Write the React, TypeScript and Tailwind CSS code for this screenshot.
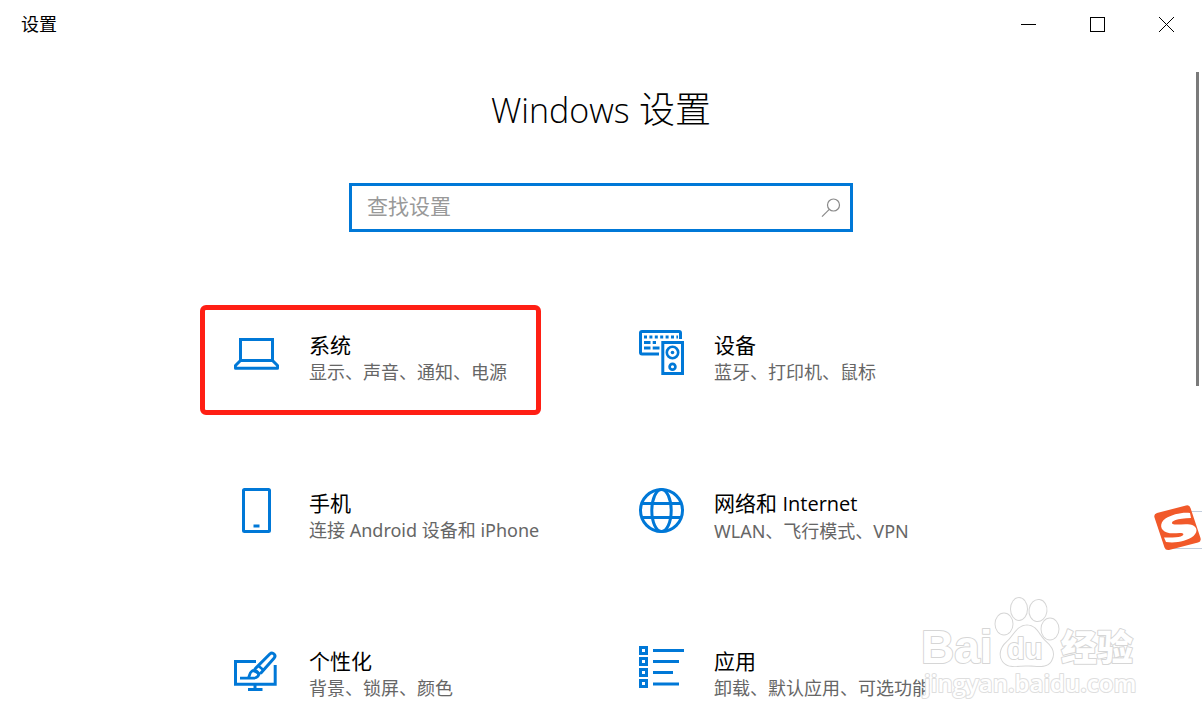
import type { ReactNode } from "react";

const ICON = "h-12 w-12 shrink-0 text-[#0078d7]";

function LaptopIcon() {
  return (
    <svg className={ICON} viewBox="0 0 48 48" fill="none" stroke="currentColor" strokeWidth="3" aria-hidden="true">
      <rect x="7.5" y="10.5" width="32" height="21" />
      <path d="M7.5 31.5L2.5 36.5V39.2H44.5V36.5L39.5 31.5" strokeLinejoin="round" />
    </svg>
  );
}

function DevicesIcon() {
  return (
    <svg className={ICON} viewBox="0 0 48 48" fill="none" stroke="currentColor" strokeWidth="3" aria-hidden="true">
      <path d="M21 25H4Q2.5 25 2.5 23.5V4Q2.5 2.5 4 2.5H41Q42.5 2.5 42.5 4V10" />
      <path d="M6 8H40" strokeDasharray="3 2.4" />
      <path d="M6 13.5H12.5M14.7 13.5H18M6 19H12.5M14.7 19H21.5" />
      <rect x="24.8" y="13.5" width="19.7" height="31" />
      <circle cx="34.5" cy="23.5" r="5.7" strokeWidth="2.6" />
      <circle cx="34.5" cy="23.5" r="1.8" fill="currentColor" stroke="none" />
      <circle cx="34.5" cy="37.7" r="2.9" strokeWidth="2.7" />
    </svg>
  );
}

function PhoneIcon() {
  return (
    <svg className={ICON} viewBox="0 0 48 48" fill="none" stroke="currentColor" strokeWidth="3" aria-hidden="true">
      <rect x="10.5" y="2.5" width="26" height="42" rx="1" />
      <path d="M20.5 39H26.5" />
    </svg>
  );
}

function GlobeIcon() {
  return (
    <svg className={ICON} viewBox="0 0 48 48" fill="none" stroke="currentColor" strokeWidth="3" aria-hidden="true">
      <circle cx="23.5" cy="23.5" r="21" />
      <ellipse cx="23.5" cy="23.5" rx="9.7" ry="21" />
      <path d="M3.5 16.5H43.5M3.5 30.5H43.5" />
    </svg>
  );
}

function PaintIcon() {
  return (
    <svg className={ICON} viewBox="0 0 48 48" fill="none" stroke="currentColor" strokeWidth="3" aria-hidden="true">
      <path d="M23 16.5H2.5V39.3H42.2V20" />
      <path d="M22 40V44.5M15 44.5H29.5" />
      <path d="M21.5 24.5L36.8 9Q39 7 41 9Q43 11 41 13.2L27.5 28.5" strokeWidth="3" />
      <path d="M20.5 25.5L27.5 29.5M25 20.5L31 25.5" strokeWidth="2.6" />
      <path d="M7 33.2H15C17 31.5 16 28.5 18.5 26.5C20.5 24.8 23.5 25.3 25 27.5C26.5 30.5 24.5 33.2 20.5 33.2H14" strokeWidth="2.8" />
    </svg>
  );
}

function AppsIcon() {
  return (
    <svg className={ICON} viewBox="0 0 48 48" fill="none" stroke="currentColor" strokeWidth="3" aria-hidden="true">
      <path d="M2.5 2.5H8.5V8.5H2.5ZM2.5 13.5H8.5V19.5H2.5ZM2.5 24.5H8.5V30.5H2.5ZM2.5 35.5H8.5V41.5H2.5Z" />
      <path d="M15 5.5H46M15 16.5H41M15 27.5H35M15 39H41" />
    </svg>
  );
}

type Category = { title: ReactNode; detail: string; icon: ReactNode; highlighted?: boolean };

const categories: Category[] = [
  { title: "系统", detail: "显示、声音、通知、电源", icon: <LaptopIcon />, highlighted: true },
  { title: "设备", detail: "蓝牙、打印机、鼠标", icon: <DevicesIcon /> },
  { title: "手机", detail: "连接 Android 设备和 iPhone", icon: <PhoneIcon /> },
  {
    title: (
      <>
        网络和 <span className="text-xl leading-7">Internet</span>
      </>
    ),
    detail: "WLAN、飞行模式、VPN",
    icon: <GlobeIcon />,
  },
  { title: "个性化", detail: "背景、锁屏、颜色", icon: <PaintIcon /> },
  { title: "应用", detail: "卸载、默认应用、可选功能", icon: <AppsIcon /> },
];

function CategoryTile({ title, detail, icon, highlighted }: Category) {
  return (
    <a
      href="#"
      className={`flex h-[110px] items-start gap-7 whitespace-nowrap rounded-md border-[5px] pl-7 pt-[19px] ${
        highlighted ? "border-[#ff1f14]" : "border-transparent"
      }`}
    >
      {icon}
      <span className="flex flex-col pt-0.5">
        <span className="text-[21px] leading-7 text-black">{title}</span>
        <span className="font-['Noto_Sans','Noto_Sans_CJK_SC',sans-serif] text-lg leading-[27px] text-[#666666]">
          {detail}
        </span>
      </span>
    </a>
  );
}

function TitleBar() {
  const button = "flex h-12 w-[69px] items-center justify-center";
  return (
    <header className="flex h-12 shrink-0 items-center justify-between pl-[21px] pr-px">
      <span className="text-lg text-black">设置</span>
      <div className="flex">
        <button type="button" aria-label="最小化" className={button}>
          <svg className="h-[15px] w-[15px]" viewBox="0 0 15 15" stroke="#000" aria-hidden="true"><path d="M0 7.5H15" /></svg>
        </button>
        <button type="button" aria-label="最大化" className={button}>
          <svg className="h-[15px] w-[15px]" viewBox="0 0 15 15" fill="none" stroke="#000" aria-hidden="true"><rect x=".5" y=".5" width="14" height="14" /></svg>
        </button>
        <button type="button" aria-label="关闭" className={button}>
          <svg className="h-[15px] w-[15px]" viewBox="0 0 15 15" stroke="#000" aria-hidden="true"><path d="M0 0L15 15M15 0L0 15" /></svg>
        </button>
      </div>
    </header>
  );
}

function Watermark() {
  return (
    <svg
      className="pointer-events-none absolute right-[52px] bottom-4 h-[120px] w-[240px]"
      viewBox="0 0 240 120"
      fill="#fff"
      stroke="#d6d6d6"
      strokeWidth="2"
      strokeLinejoin="round"
      paintOrder="stroke"
    >
      <text x="11" y="73" fontSize="46" fontWeight="700" fontFamily="Liberation Sans, sans-serif">Bai</text>
      <ellipse cx="94" cy="34" rx="8.5" ry="10.5" />
      <ellipse cx="109" cy="19" rx="8" ry="11" />
      <ellipse cx="128" cy="20.5" rx="8.5" ry="10.5" transform="rotate(8 128 20.5)" />
      <ellipse cx="140" cy="39" rx="8.5" ry="10.5" />
      <path d="M117 35.5C107 35.5 104 46 97 52C90 58 89 66 93 71.5C99 79 109 75 117 75.5C125 75 136 79 141 71C145 64 143 58 136 52C129 46 127 35.5 117 35.5Z" />
      <text x="97" y="69" fontSize="29" fontWeight="700" fontFamily="Liberation Sans, sans-serif">du</text>
      <text x="151" y="71" fontSize="36" fontWeight="900" fontFamily="Noto Sans CJK SC, sans-serif">经验</text>
      <text x="14" y="102" fontSize="24" fontWeight="600" stroke="#dedede" fontFamily="Open Sans, sans-serif">jingyan.baidu.com</text>
    </svg>
  );
}

function InputMethodBadge() {
  return (
    <svg className="absolute top-[500px] right-0 h-[54px] w-[50px]" viewBox="0 0 50 54" aria-hidden="true">
      <path d="M20 11.5H51V48.500H20Z" fill="#fff" stroke="#c3cedd" />
      <path d="M5 13L34 5.500Q37.500 4.500 38.500 8L48.500 38Q49.500 41.500 46 42.500L17 50Q13.500 50.500 12.500 47.500L2.500 17.500Q1.500 14 5 13Z" fill="#f1592a" />
      <path d="M38 13C30 12 20 14.500 13.500 18.500C7 23 8 30.500 15 32.500C21 34.500 27 32 31 33.500C33 36 27 38 12 37.500L14 42C24 43.500 35 41 41.500 36C47 31 44.500 25.500 38 24.500C31 23.500 25 25.500 20.500 24C18 21 25 18.500 39 18Z" fill="#fff" />
    </svg>
  );
}

export default function App() {
  return (
    <div className="relative flex h-screen flex-col overflow-hidden bg-white font-['Open_Sans','Noto_Sans_CJK_SC',sans-serif]">
      <TitleBar />
      <main className="min-h-0 flex-1 overflow-y-auto px-8 pb-8 [scrollbar-width:none]">
        <h1 className="mt-[34px] text-center text-4xl leading-[56px] font-light text-black">
          <span className="text-[34px] leading-[56px]">Windows</span> 设置
        </h1>
        <label className="mx-auto mt-[45px] flex h-[49px] w-full max-w-[504px] items-center border-[3px] border-[#0078d7] pr-[9px] pl-[15px]">
          <input
            type="search"
            aria-label="查找设置"
            placeholder="查找设置"
            className="min-w-0 flex-1 bg-transparent pb-1 text-[21px] leading-7 text-black outline-none placeholder:text-[#999999]"
          />
          <svg className="h-5 w-5" viewBox="0 0 20 20" fill="none" stroke="#8a8a8a" strokeWidth="1.2" aria-hidden="true">
            <circle cx="12.5" cy="7" r="6" />
            <path d="M8.3 11.3L1 18.7" />
          </svg>
        </label>
        <nav className="mx-auto mt-[73px] grid max-w-[802px] grid-cols-[repeat(auto-fill,341px)] gap-x-16 gap-y-12">
          {categories.map((category) => (
            <CategoryTile key={category.detail} {...category} />
          ))}
        </nav>
      </main>
      <div className="absolute top-[72px] right-[3px] h-[314px] w-[3px] bg-[#7a7a7a]" />
      <Watermark />
      <InputMethodBadge />
    </div>
  );
}
